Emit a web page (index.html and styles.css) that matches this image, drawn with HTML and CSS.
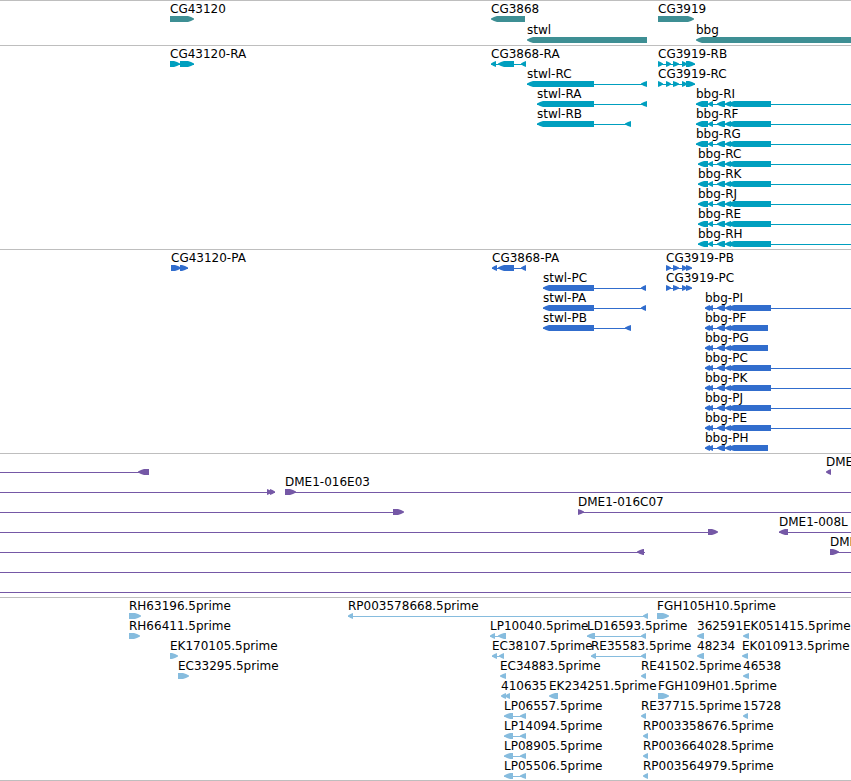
FILE: index.html
```html
<!DOCTYPE html>
<html lang="en">
<head>
  <meta charset="UTF-8">
  <meta name="viewport" content="width=device-width, initial-scale=1.0">
  <title>Genome tracks</title>
  <link rel="stylesheet" href="styles.css">
</head>
<body>
  <main class="tracks">
    <section class="track gene" id="gene" aria-label="Genes"></section>
    <section class="track transcript" id="transcript" aria-label="Transcripts"></section>
    <section class="track cds" id="cds" aria-label="CDS"></section>
    <section class="track bac" id="bac" aria-label="BACs"></section>
    <section class="track est" id="est" aria-label="ESTs"></section>
  </main>
  <script src="tracks.js"></script>
</body>
</html>
```
FILE: styles.css
```css
body {
  margin: 0;
  background-color: #fff;
  font-family: "DejaVu Sans", sans-serif;
  font-size: 12px;
}
.tracks {
  border-bottom: 1px solid #bebebe;
  overflow: hidden;
}
.track {
  border-top: 1px solid #bebebe;
  padding-bottom: 3px;
}
.track.gene,
.track.est {
  padding-bottom: 2px;
}
.row {
  display: block;
  width: 100%;
  height: 20px;
  overflow: visible;
}
.gene .row {
  height: 21px;
}
.row text {
  fill: #000;
}
.row rect {
  shape-rendering: crispEdges;
}
.gene {
  color: #3e8f94;
}
.transcript {
  color: #009fbf;
}
.cds {
  color: #316dcd;
}
.bac {
  color: #7558a6;
}
.est {
  color: #86bcde;
}
```
FILE: tracks.js
```javascript
const SVG_NS = 'http://www.w3.org/2000/svg';
const LABEL_Y = 12;
const BAR_Y = 15;
const LINE_Y = 18;
const HEAD = 6;
const EDGE = 4000; // feature runs on past the window

// feature: [label, strand, blocks, line]
const utr = [[708, 713], [717, 725], [725, 731], [728, 771]];
const cdsOpen = [[705, 710], [708, 713], [717, 725], [725, 731], [728, 771]];
const cdsShort = [[705, 710], [708, 713], [717, 725], [725, 731], [728, 768]];
const cg3919 = [[658, 663], [666, 671], [673, 679], [682, 687], [686, 695]];
const cg3919p = [[666, 671], [673, 679], [682, 687], [686, 692]];
const lp = [[504, 513], [520, 526]];

const bbgR = (name, start) => ['bbg-' + name, '-', [[start, 708], ...utr], [start, EDGE]];
const bbgP = (name) => ['bbg-' + name, '-', cdsOpen, [705, EDGE]];
const bbgPShort = (name) => ['bbg-' + name, '-', cdsShort, [705, 768]];

const tracks = {
  gene: [
    [
      ['CG43120', '+', [[170, 194]]],
      ['CG3868', '-', [[491, 525]]],
      ['CG3919', '+', [[658, 694]]]
    ],
    [
      ['stwl', '-', [[527, 647]]],
      ['bbg', '-', [[696, EDGE]]]
    ]
  ],
  transcript: [
    [
      ['CG43120-RA', '+', [[170, 180], [180, 194]], [170, 194]],
      ['CG3868-RA', '-', [[491, 496], [498, 514], [521, 526]], [491, 526]],
      ['CG3919-RB', '+', cg3919, [658, 695]]
    ],
    [
      ['stwl-RC', '-', [[527, 594], [641, 647]], [527, 647]],
      ['CG3919-RC', '+', cg3919, [658, 695]]
    ],
    [['stwl-RA', '-', [[537, 594], [641, 647]], [537, 647]], bbgR('RI', 696)],
    [['stwl-RB', '-', [[537, 594], [625, 631]], [537, 631]], bbgR('RF', 696)],
    [bbgR('RG', 696)],
    [bbgR('RC', 698)],
    [bbgR('RK', 698)],
    [bbgR('RJ', 698)],
    [bbgR('RE', 698)],
    [bbgR('RH', 698)]
  ],
  cds: [
    [
      ['CG43120-PA', '+', [[171, 181], [180, 188]], [171, 188]],
      ['CG3868-PA', '-', [[492, 497], [498, 514], [521, 526]], [492, 526]],
      ['CG3919-PB', '+', cg3919p, [666, 692]]
    ],
    [
      ['stwl-PC', '-', [[543, 594], [641, 646]], [543, 646]],
      ['CG3919-PC', '+', cg3919p, [666, 692]]
    ],
    [['stwl-PA', '-', [[543, 594], [641, 646]], [543, 646]], bbgP('PI')],
    [['stwl-PB', '-', [[543, 594], [625, 631]], [543, 631]], bbgPShort('PF')],
    [bbgPShort('PG')],
    [bbgP('PC')],
    [bbgP('PK')],
    [bbgP('PJ')],
    [bbgP('PE')],
    [bbgPShort('PH')]
  ],
  bac: [
    [
      ['', '-', [[138, 149]], [0, 149]],
      ['DME', '-', [[826, 831]]]
    ],
    [
      ['', '+', [[267, 272], [270, 275]], [0, 275]],
      ['DME1-016E03', '+', [[285, 296]], [285, EDGE]]
    ],
    [
      ['', '+', [[393, 404]], [0, 403]],
      ['DME1-016C07', '+', [[578, 584]], [578, EDGE]]
    ],
    [
      ['', '+', [[708, 718]], [0, 717]],
      ['DME1-008L', '-', [[779, 788]], [779, EDGE]]
    ],
    [
      ['', '-', [[637, 644]], [0, 645]],
      ['DME', '+', [[830, 839]], [830, EDGE]]
    ],
    [['', '+', [], [0, EDGE]]],
    [['', '+', [], [0, EDGE]]]
  ],
  est: [
    [
      ['RH63196.5prime', '+', [[129, 141]]],
      ['RP003578668.5prime', '-', [[348, 353], [643, 648]], [348, 648]],
      ['FGH105H10.5prime', '+', [[657, 669]]]
    ],
    [
      ['RH66411.5prime', '+', [[129, 140]]],
      ['LP10040.5prime', '-', [[490, 495], [498, 506]], [490, 506]],
      ['LD16593.5prime', '-', [[587, 595], [641, 646]], [587, 646]],
      ['362591', '-', [[697, 704]]],
      ['EK051415.5prime', '-', [[743, 749]]]
    ],
    [
      ['EK170105.5prime', '+', [[170, 178]]],
      ['EC38107.5prime', '-', [[492, 497], [499, 504]], [492, 504]],
      ['RE35583.5prime', '-', [[591, 596], [641, 646]], [591, 646]],
      ['48234', '-', [[697, 704]]],
      ['EK010913.5prime', '-', [[742, 748]]]
    ],
    [
      ['EC33295.5prime', '+', [[178, 189]]],
      ['EC34883.5prime', '-', [[500, 506]]],
      ['RE41502.5prime', '-', [[641, 646]]],
      ['46538', '-', [[743, 749]]]
    ],
    [
      ['410635', '-', [[501, 506], [505, 510]]],
      ['EK234251.5prime', '-', [[549, 558]]],
      ['FGH109H01.5prime', '+', [[658, 669]]]
    ],
    [
      ['LP06557.5prime', '-', lp, [504, 526]],
      ['RE37715.5prime', '-', [[641, 646]]],
      ['15728', '-', [[743, 748]]]
    ],
    [
      ['LP14094.5prime', '-', lp, [504, 526]],
      ['RP003358676.5prime', '-', [[643, 648]]]
    ],
    [
      ['LP08905.5prime', '-', lp, [504, 526]],
      ['RP003664028.5prime', '-', [[643, 648]]]
    ],
    [
      ['LP05506.5prime', '-', lp, [504, 526]],
      ['RP003564979.5prime', '-', [[643, 648]]]
    ]
  ]
};

function add(parent, tag, attrs) {
  const el = document.createElementNS(SVG_NS, tag);
  for (const name in attrs) {
    el.setAttribute(name, attrs[name]);
  }
  parent.appendChild(el);
  return el;
}

// Block with a rounded arrow head on its 3' end
function blockPath(start, end, strand) {
  const head = Math.min(HEAD, end - start);
  const dir = strand === '+' ? 1 : -1;
  const tip = strand === '+' ? end : start;
  const tail = strand === '+' ? start : end;
  const neck = tip - dir * head;
  const bend = tip - dir * head / 2;
  return `M${tail} ${BAR_Y}H${neck}L${bend} ${BAR_Y + 1}L${tip} ${BAR_Y + 2.5}` +
    `V${BAR_Y + 3.5}L${bend} ${BAR_Y + 5}L${neck} ${BAR_Y + 6}H${tail}Z`;
}

function drawFeature(row, [label, strand, blocks, line]) {
  if (line) {
    add(row, 'rect', { x: line[0], y: LINE_Y, width: line[1] - line[0], height: 1, fill: 'currentColor' });
  }
  blocks.forEach(([start, end]) => {
    add(row, 'path', { d: blockPath(start, end, strand), fill: 'currentColor' });
  });
  if (label) {
    add(row, 'text', { x: blocks[0][0], y: LABEL_Y }).textContent = label;
  }
}

for (const id in tracks) {
  const track = document.getElementById(id);
  tracks[id].forEach((features) => {
    const row = add(track, 'svg', { class: 'row' });
    features.forEach((feature) => drawFeature(row, feature));
  });
}
```
